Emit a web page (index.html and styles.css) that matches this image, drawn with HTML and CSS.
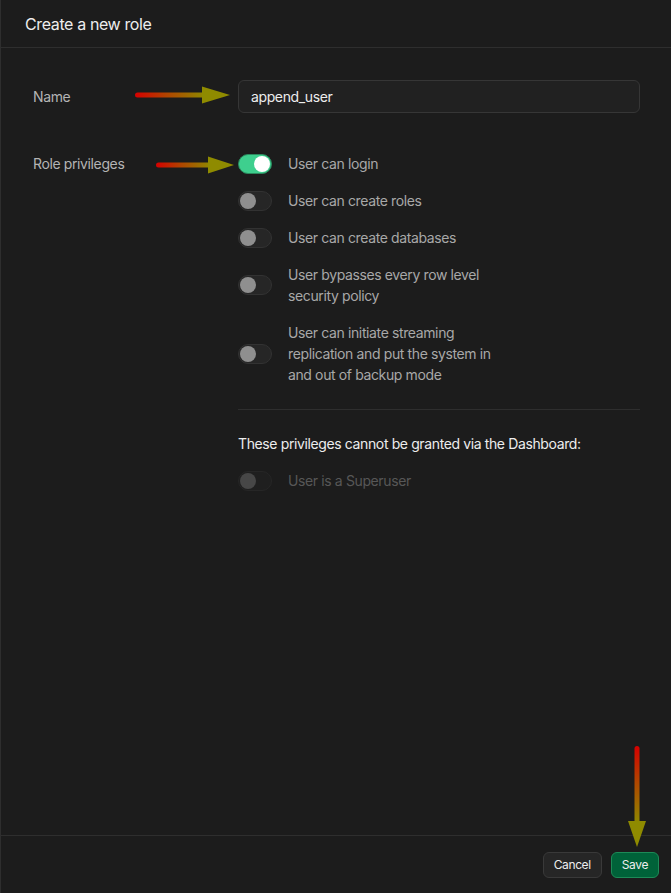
FILE: index.html
```html
<!DOCTYPE html>
<html lang="en">
<head>
<meta charset="utf-8">
<title>Create a new role</title>
<link rel="stylesheet" href="styles.css">
</head>
<body>
<div class="panel">
  <header class="panel-header">Create a new role</header>
  <main class="panel-body">
    <div class="form-row name-row">
      <label class="row-label" for="role-name">Name</label>
      <input class="text-input" id="role-name" type="text" value="append_user">
    </div>
    <div class="form-row priv-row">
      <div class="row-label">Role privileges</div>
      <div class="priv-list">
        <div class="toggle-row">
          <span class="toggle on"><span class="knob"></span></span>
          <span class="toggle-text">User can login</span>
        </div>
        <div class="toggle-row">
          <span class="toggle"><span class="knob"></span></span>
          <span class="toggle-text">User can create roles</span>
        </div>
        <div class="toggle-row">
          <span class="toggle"><span class="knob"></span></span>
          <span class="toggle-text">User can create databases</span>
        </div>
        <div class="toggle-row">
          <span class="toggle"><span class="knob"></span></span>
          <span class="toggle-text">User bypasses every row level<br>security policy</span>
        </div>
        <div class="toggle-row">
          <span class="toggle"><span class="knob"></span></span>
          <span class="toggle-text">User can initiate streaming<br>replication and put the system in<br>and out of backup mode</span>
        </div>
        <hr class="divider">
        <p class="note">These privileges cannot be granted via the Dashboard:</p>
        <div class="toggle-row disabled">
          <span class="toggle"><span class="knob"></span></span>
          <span class="toggle-text">User is a Superuser</span>
        </div>
      </div>
    </div>
  </main>
  <footer class="panel-footer">
    <button class="btn btn-cancel" type="button">Cancel</button>
    <button class="btn btn-save" type="button">Save</button>
  </footer>

  <svg class="arrow arrow-name" width="100" height="20" viewBox="0 0 100 20">
    <defs>
      <linearGradient id="g1" gradientUnits="userSpaceOnUse" x1="0" y1="0" x2="70" y2="0">
        <stop offset="0" stop-color="#d60000"/>
        <stop offset="0.45" stop-color="#b04400"/>
        <stop offset="1" stop-color="#8e8a00"/>
      </linearGradient>
    </defs>
    <rect x="0" y="7.5" width="72" height="5" rx="2.5" fill="url(#g1)"/>
    <polygon points="67,1.5 95,10 67,18.5" fill="#8f8b00"/>
  </svg>

  <svg class="arrow arrow-priv" width="82" height="20" viewBox="0 0 82 20">
    <defs>
      <linearGradient id="g2" gradientUnits="userSpaceOnUse" x1="0" y1="0" x2="55" y2="0">
        <stop offset="0" stop-color="#d60000"/>
        <stop offset="0.45" stop-color="#b04400"/>
        <stop offset="1" stop-color="#8e8a00"/>
      </linearGradient>
    </defs>
    <rect x="0" y="7.5" width="57" height="5" rx="2.5" fill="url(#g2)"/>
    <polygon points="52,1.5 78,10 52,18.5" fill="#8f8b00"/>
  </svg>

  <svg class="arrow arrow-save" width="20" height="104" viewBox="0 0 20 104">
    <defs>
      <linearGradient id="g3" gradientUnits="userSpaceOnUse" x1="0" y1="0" x2="0" y2="78">
        <stop offset="0" stop-color="#d60000"/>
        <stop offset="0.45" stop-color="#b04400"/>
        <stop offset="1" stop-color="#8e8a00"/>
      </linearGradient>
    </defs>
    <rect x="7.5" y="0" width="5" height="80" rx="2.5" fill="url(#g3)"/>
    <polygon points="1,75 19,75 10,101" fill="#8f8b00"/>
  </svg>
</div>
</body>
</html>
```

FILE: styles.css
```css
* { box-sizing: border-box; }

html, body {
  margin: 0;
  padding: 0;
  background: #1c1c1c;
}

body {
  font-family: Inter, "Noto Sans", "Liberation Sans", sans-serif;
  color: #ededed;
  letter-spacing: -0.38px;
}

.panel {
  position: relative;
  width: 671px;
  height: 893px;
  display: flex;
  flex-direction: column;
  background: #1c1c1c;
  border-left: 1px solid #2e2e2e;
}

.panel-header {
  height: 48px;
  padding: 0 24px;
  display: flex;
  align-items: center;
  font-size: 16px;
  color: #ededed;
  border-bottom: 1px solid #2e2e2e;
  flex-shrink: 0;
}

.panel-body {
  flex: 1;
  padding: 32px 31px 0 32px;
  display: flex;
  flex-direction: column;
  gap: 40px;
}

.form-row {
  display: grid;
  grid-template-columns: 205px 1fr;
}

.name-row { align-items: center; }
.priv-row { align-items: start; }

.row-label {
  font-size: 14px;
  line-height: 21px;
  color: #b4b4b4;
}

.text-input {
  height: 33px;
  width: 100%;
  background: #212121;
  border: 1px solid #363636;
  border-radius: 6px;
  padding: 0 12px;
  font-family: inherit;
  letter-spacing: inherit;
  font-size: 14px;
  color: #ededed;
  outline: none;
}

.priv-list {
  display: flex;
  flex-direction: column;
  gap: 16px;
}

.toggle-row {
  display: flex;
  align-items: center;
  gap: 16px;
}

.toggle {
  position: relative;
  flex-shrink: 0;
  width: 34px;
  height: 20px;
  border-radius: 10px;
  background: #262626;
  border: 1px solid #323232;
  display: flex;
  align-items: center;
  padding: 0 1px;
}

.toggle .knob {
  width: 16px;
  height: 16px;
  border-radius: 50%;
  background: #8f8f8f;
}

.toggle.on {
  background: #3ecf8e;
  border-color: #2b8a5e;
  justify-content: flex-end;
}

.toggle.on .knob { background: #ffffff; }

.toggle-text {
  font-size: 14px;
  line-height: 21px;
  color: #a8a8a8;
}

.toggle-row.disabled .toggle {
  background: #1f1f1f;
  border-color: #262626;
}
.toggle-row.disabled .knob { background: #474747; }
.toggle-row.disabled .toggle-text { color: #575757; }

.divider {
  margin: 8px 0 7px;
  border: 0;
  border-top: 1px solid #2e2e2e;
  height: 0;
}

.note {
  margin: 0;
  font-size: 14px;
  line-height: 21px;
  color: #ededed;
}

.panel-footer {
  height: 58px;
  flex-shrink: 0;
  border-top: 1px solid #2e2e2e;
  display: flex;
  justify-content: flex-end;
  align-items: center;
  gap: 9px;
  padding: 0 12px 0 0;
}

.btn {
  height: 26px;
  padding: 0 10px;
  border-radius: 6px;
  font-family: inherit;
  letter-spacing: inherit;
  font-size: 12px;
  cursor: pointer;
}

.btn-cancel {
  background: #262626;
  border: 1px solid #393939;
  color: #ededed;
}

.btn-save {
  background: #006239;
  border: 1px solid #1d8a57;
  color: #ededed;
}

.arrow {
  position: absolute;
  pointer-events: none;
}

.arrow-name { left: 134px; top: 85px; }
.arrow-priv { left: 155px; top: 155px; }
.arrow-save { left: 626px; top: 746px; }
```
